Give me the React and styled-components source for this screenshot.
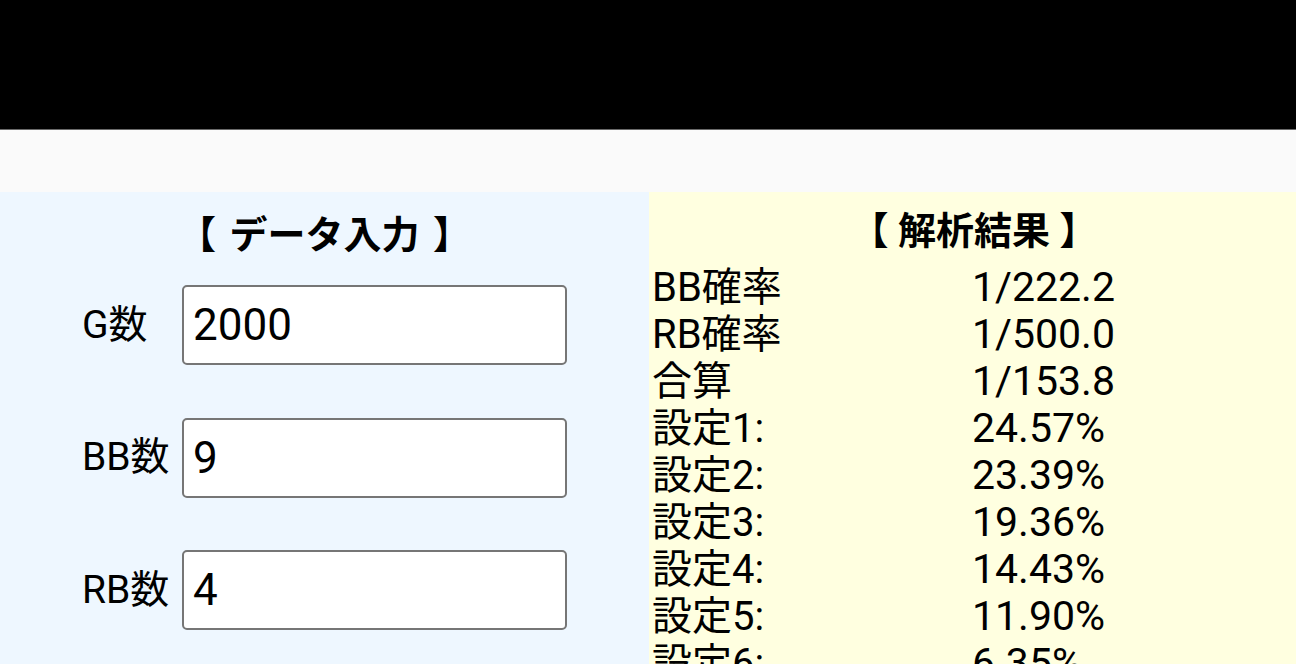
import React, { useState } from "react";
import styled, { createGlobalStyle } from "styled-components";

const GlobalStyle = createGlobalStyle`
  html, body {
    margin: 0;
    padding: 0;
    background: #fafafa;
    font-family: Roboto, "Noto Sans CJK JP", sans-serif;
    color: #000;
    overflow: hidden;
  }
`;

const Page = styled.div`
  width: 1296px;
  height: 664px;
  display: flex;
  flex-direction: column;
  overflow: hidden;
`;

const TopBar = styled.div`
  height: 129px;
  flex-shrink: 0;
  background: #000;
  border-bottom: 1px solid #6a6a6a;
`;

const Strip = styled.div`
  height: 62px;
  flex-shrink: 0;
  background: #fafafa;
`;

const Columns = styled.div`
  flex: 1;
  display: grid;
  grid-template-columns: 649px 1fr;
  min-height: 0;
`;

const InputPanel = styled.section`
  background: #eef7ff;
  padding-top: 19px;
`;

const ResultPanel = styled.section`
  background: #ffffe0;
  padding: 15px 0 0 3px;
`;

const Title = styled.h2`
  margin: 0;
  font-size: 38px;
  line-height: 48px;
  font-weight: 700;
  text-align: center;
  word-spacing: ${(p) => p.$spread || 0}px;
  font-family: Roboto, "Noto Sans CJK JP", sans-serif;
`;

const Form = styled.div`
  display: flex;
  flex-direction: column;
  gap: 52.5px;
  padding: 26px 0 0 82px;
`;

const FieldRow = styled.label`
  display: grid;
  grid-template-columns: 100px 385px;
  align-items: center;
`;

const FieldLabel = styled.span`
  font-size: 39px;
  line-height: 1;
`;

const NumberInput = styled.input`
  box-sizing: border-box;
  width: 385px;
  height: 80px;
  border: 2px solid #767676;
  border-radius: 5px;
  background: #fff;
  padding: 0 0 0 9px;
  font-family: Roboto, sans-serif;
  font-size: 44px;
  color: #000;
  outline: none;
`;

const ResultGrid = styled.div`
  display: grid;
  grid-template-columns: 320px 1fr;
  font-size: 40px;
  line-height: 47px;
  padding-top: 9px;
`;

const Cell = styled.div`
  white-space: nowrap;
`;

const ValueCell = styled(Cell)`
  font-size: 41px;
`;

const settings = [
  ["設定1:", "24.57%"],
  ["設定2:", "23.39%"],
  ["設定3:", "19.36%"],
  ["設定4:", "14.43%"],
  ["設定5:", "11.90%"],
  ["設定6:", "6.35%"],
];

const ratio = (games, count) => {
  const g = parseFloat(games);
  const c = parseFloat(count);
  if (!g || !c) return "-";
  return "1/" + (g / c).toFixed(1);
};

export default function App() {
  const [games, setGames] = useState("2000");
  const [bb, setBb] = useState("9");
  const [rb, setRb] = useState("4");

  const fields = [
    ["G数", games, setGames],
    ["BB数", bb, setBb],
    ["RB数", rb, setRb],
  ];

  const results = [
    ["BB確率", ratio(games, bb)],
    ["RB確率", ratio(games, rb)],
    ["合算", ratio(games, (parseFloat(bb) || 0) + (parseFloat(rb) || 0))],
    ...settings,
  ];

  return (
    <Page>
      <GlobalStyle />
      <TopBar />
      <Strip />
      <Columns>
        <InputPanel>
          <Title $spread={4}>【 データ入力 】</Title>
          <Form>
            {fields.map(([label, value, setValue]) => (
              <FieldRow key={label}>
                <FieldLabel>{label}</FieldLabel>
                <NumberInput
                  type="text"
                  inputMode="numeric"
                  value={value}
                  onChange={(e) => setValue(e.target.value)}
                />
              </FieldRow>
            ))}
          </Form>
        </InputPanel>
        <ResultPanel>
          <Title>【 解析結果 】</Title>
          <ResultGrid>
            {results.map(([label, value]) => (
              <React.Fragment key={label}>
                <Cell>{label}</Cell>
                <ValueCell>{value}</ValueCell>
              </React.Fragment>
            ))}
          </ResultGrid>
        </ResultPanel>
      </Columns>
    </Page>
  );
}
